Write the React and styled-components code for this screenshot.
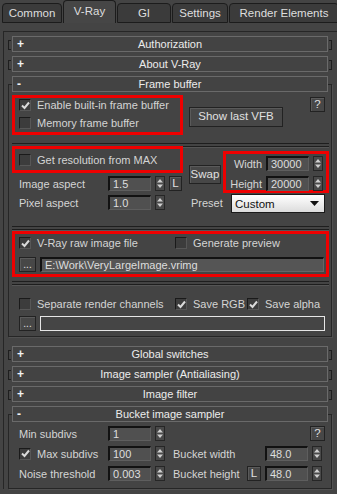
import React from 'react';
import styled, { createGlobalStyle } from 'styled-components';

const GlobalStyle = createGlobalStyle`
  html, body { margin: 0; padding: 0; background: #444; }
  body { font-family: "Liberation Sans", Arial, sans-serif; font-size: 11px; color: #dcdcdc; }
`;

const Window = styled.div`
  width: 337px;
  height: 494px;
  overflow: hidden;
  background: #444;
`;

const TabBar = styled.div`
  display: flex;
  align-items: flex-end;
  gap: 1px;
  height: 23px;
  padding-left: 2px;
  border-bottom: 1px solid transparent;
`;

const Tab = styled.div`
  flex: none;
  width: ${p => p.$w}px;
  height: ${p => (p.$active ? 23 : 20)}px;
  box-sizing: border-box;
  display: flex;
  align-items: center;
  justify-content: center;
  padding-bottom: ${p => (p.$active ? 2 : 0)}px;
  background: ${p => (p.$active ? '#464646' : '#3b3b3b')};
  border: 1px solid #1c1c1c;
  border-bottom: ${p => (p.$active ? 'none' : '1px solid #1c1c1c')};
  border-radius: 4px 4px 0 0;
  color: #dedede;
  font-size: 11.5px;
`;

const Panel = styled.div`
  display: flex;
  flex-direction: column;
  align-items: flex-start;
  margin: 7px 0 0 3px;
  border-top: 1px solid #262626;
  border-left: 1px solid #262626;
  padding: 4px 5px 0 4px;
`;

const HeaderBar = styled.div`
  display: grid;
  grid-template-columns: 16px 1fr 16px;
  align-items: center;
  height: 16px;
  box-sizing: border-box;
  border: 1px solid #6a6a6a;
  background: #434343;
  color: #ececec;
  line-height: 14px;
`;

const Sign = styled.span`
  padding-left: 4px;
  font-weight: bold;
  font-size: 12px;
  color: #f2f2f2;
`;

const Title = styled.span`
  text-align: center;
  white-space: nowrap;
`;

const Collapsed = styled.div`
  position: relative;
  width: 324px;
  box-sizing: border-box;
  padding: 0 4px;
  margin-bottom: 4px;

  &::before, &::after {
    content: '';
    position: absolute;
    top: 4px;
    width: 2px;
    height: 8px;
    border: 1px solid #1e1e1e;
  }
  &::before { left: 0; border-right: none; }
  &::after { right: 0; border-left: none; }
`;

const OpenFrame = styled.div`
  width: 324px;
  box-sizing: border-box;
  margin-top: 8px;
  margin-bottom: ${p => p.$mb || 0}px;
  border: 1px solid #262626;
  box-shadow: 1px 1px 0 #505050;
`;

const OpenHeader = styled(HeaderBar)`
  margin: -9px 3px 0 3px;
`;

const Body = styled.div`
  padding: ${p => p.$pad};
`;

const Rollout = ({ title, open, mb, pad, children }) =>
  open ? (
    <OpenFrame $mb={mb}>
      <OpenHeader>
        <Sign>-</Sign>
        <Title>{title}</Title>
        <span />
      </OpenHeader>
      <Body $pad={pad}>{children}</Body>
    </OpenFrame>
  ) : (
    <Collapsed>
      <HeaderBar>
        <Sign>+</Sign>
        <Title>{title}</Title>
        <span />
      </HeaderBar>
    </Collapsed>
  );

const RedBox = styled.div`
  box-sizing: border-box;
  width: ${p => p.$w}px;
  height: ${p => p.$h}px;
  margin-top: ${p => p.$mt || 0}px;
  border: 3px solid #ee0000;
  padding: ${p => p.$pad || '0'};
  display: flex;
  flex-direction: column;
  justify-content: ${p => p.$center ? 'center' : 'flex-start'};
  gap: ${p => p.$gap || 0}px;
`;

const Row = styled.div`
  display: flex;
  align-items: center;
  height: ${p => p.$h || 15}px;
  margin-top: ${p => p.$mt || 0}px;
  padding-left: ${p => p.$pl || 0}px;
  gap: ${p => p.$gap || 0}px;
`;

const Label = styled.div`
  flex: none;
  width: ${p => (p.$w ? `${p.$w}px` : 'auto')};
  padding-left: ${p => p.$pl || 0}px;
  box-sizing: border-box;
  text-align: ${p => p.$right ? 'right' : 'left'};
  white-space: nowrap;
  color: #d4d4d4;
`;

const Field = styled.div`
  flex: none;
  box-sizing: border-box;
  width: ${p => p.$w}px;
  height: 15px;
  margin-left: ${p => p.$ml || 0}px;
  padding-left: 3px;
  line-height: 12px;
  background: #505050;
  border-top: 2px solid #121212;
  border-left: 2px solid #121212;
  border-right: 1px solid #5e5e5e;
  border-bottom: 1px solid #5e5e5e;
  color: #dedede;
  white-space: nowrap;
  overflow: hidden;
`;

const PathField = styled(Field)`
  background: ${p => (p.$outline ? '#454545' : '#555')};
  border: ${p => (p.$outline ? '1px solid #e6e6e6' : '')};
  ${p => !p.$outline && 'border-right: 1px solid #666; border-bottom: 1px solid #666;'}
`;

const SpinBox = styled.div`
  flex: none;
  width: 10px;
  height: 15px;
  margin-left: 4px;
  box-sizing: border-box;
  border: 1px solid #262626;
  background: #494949;
  display: flex;
`;

const Spinner = () => (
  <SpinBox>
    <svg width="8" height="13" viewBox="0 0 8 13">
      <path d="M4 2 L7 5.5 L1 5.5 Z" fill="#cfcfcf" />
      <path d="M1 7.5 L7 7.5 L4 11 Z" fill="#cfcfcf" />
    </svg>
  </SpinBox>
);

const Btn = styled.div`
  flex: none;
  box-sizing: border-box;
  width: ${p => p.$w}px;
  height: ${p => p.$h}px;
  margin: ${p => p.$m || '0'};
  display: flex;
  align-items: center;
  justify-content: center;
  background: #474747;
  border: 1px solid #222;
  box-shadow: inset 1px 1px 0 #5a5a5a;
  color: #e0e0e0;
  font-size: ${p => p.$fs || 11.5}px;
  line-height: 1;
`;

const BoxWrap = styled.div`
  flex: none;
  display: flex;
  align-items: center;
  gap: 6px;
  width: ${p => (p.$w ? `${p.$w}px` : 'auto')};
  color: #d4d4d4;
  white-space: nowrap;
`;

const Square = styled.div`
  flex: none;
  width: 12px;
  height: 12px;
  box-sizing: border-box;
  background: #3c3c3c;
  border-top: 1px solid #1a1a1a;
  border-left: 1px solid #1a1a1a;
  border-right: 1px solid #575757;
  border-bottom: 1px solid #575757;
  display: flex;
  align-items: center;
  justify-content: center;
`;

const Check = ({ checked, label, w }) => (
  <BoxWrap $w={w}>
    <Square>
      {checked && (
        <svg width="9" height="9" viewBox="0 0 9 9">
          <path d="M1 4.5 L3.5 7 L8 1.5" fill="none" stroke="#dadada" strokeWidth="2" />
        </svg>
      )}
    </Square>
    {label}
  </BoxWrap>
);

const Separator = styled.div`
  margin: ${p => p.$m};
  height: 2px;
  border-top: 1px solid #1e1e1e;
  border-bottom: 1px solid #1e1e1e;
  box-shadow: 0 1px 0 #555;
`;

const Cols = styled.div`
  display: flex;
  align-items: flex-start;
  margin-top: ${p => p.$mt || 0}px;
`;

const Col = styled.div`
  flex: none;
  display: flex;
  flex-direction: column;
  width: ${p => p.$w}px;
  margin-left: ${p => p.$ml || 0}px;
`;

const Dropdown = styled.div`
  box-sizing: border-box;
  width: 94px;
  height: 19px;
  margin: 1px 0 0 8px;
  display: flex;
  align-items: center;
  justify-content: space-between;
  padding: 0 5px 0 3px;
  background: linear-gradient(#ffffff, #dcdcdc);
  border: 1px solid #1a1a1a;
  color: #111;
  font-size: 11.5px;
`;

const App = () => (
  <Window>
    <GlobalStyle />
    <TabBar>
      <Tab $w={60}>Common</Tab>
      <Tab $w={53} $active>V-Ray</Tab>
      <Tab $w={54}>GI</Tab>
      <Tab $w={56}>Settings</Tab>
      <Tab $w={110}>Render Elements</Tab>
    </TabBar>
    <Panel>
      <Rollout title="Authorization" />
      <Rollout title="About V-Ray" />
      <Rollout title="Frame buffer" open mb={9} pad="3px 2px 5px 3px">
        <Cols>
          <RedBox $w={171} $h={40} $pad="1px 0 0 4px" $gap={6}>
            <Row $h={12}><Check checked label="Enable built-in frame buffer" /></Row>
            <Row $h={12}><Check label="Memory frame buffer" /></Row>
          </RedBox>
          <Btn $w={94} $h={20} $m="12px 0 0 6px">Show last VFB</Btn>
          <Btn $w={15} $h={15} $m="2px 4px 0 auto">?</Btn>
        </Cols>
        <Separator $m="8px 0 0 0" />
        <Cols $mt={-1}>
          <Col $w={171}>
            <RedBox $w={171} $h={27} $pad="0 0 0 4px" $center>
              <Check label="Get resolution from MAX" />
            </RedBox>
            <Row $mt={3}>
              <Label $w={96} $pl={7}>Image aspect</Label>
              <Field $w={43}>1.5</Field>
              <Spinner />
              <Btn $w={13} $h={15} $m="0 0 0 4px">L</Btn>
            </Row>
            <Row $mt={4}>
              <Label $w={96} $pl={7}>Pixel aspect</Label>
              <Field $w={43}>1.0</Field>
              <Spinner />
            </Row>
          </Col>
          <Col $w={34} $ml={6}>
            <Btn $w={32} $h={19} $m="19px 0 0 0">Swap</Btn>
            <Row $mt={11}><Label $pl={2}>Preset</Label></Row>
          </Col>
          <Col $w={106}>
            <RedBox $w={106} $h={42} $mt={5} $pad="2px 3px 0 0" $gap={5}>
              <Row>
                <Label $w={36} $right>Width</Label>
                <Field $w={43} $ml={4}>30000</Field>
                <Spinner />
              </Row>
              <Row>
                <Label $w={36} $right>Height</Label>
                <Field $w={43} $ml={4}>20000</Field>
                <Spinner />
              </Row>
            </RedBox>
            <Dropdown>
              <span>Custom</span>
              <svg width="9" height="5" viewBox="0 0 9 5"><path d="M0 0 L9 0 L4.5 5 Z" fill="#111" /></svg>
            </Dropdown>
          </Col>
        </Cols>
        <Separator $m="13px 0 0 0" />
        <RedBox $w={317} $h={46} $mt={1} $pad="3px 0 0 4px" $gap={8}>
          <Row $h={12}>
            <Check checked label="V-Ray raw image file" w={156} />
            <Check label="Generate preview" />
          </Row>
          <Row>
            <Btn $w={17} $h={15} $fs={10}>...</Btn>
            <PathField $w={284} $ml={4}>E:\Work\VeryLargeImage.vrimg</PathField>
          </Row>
        </RedBox>
        <Separator $m="4px 0 0 0" />
        <Row $h={12} $mt={13} $pl={7}>
          <Check label="Separate render channels" w={156} />
          <Check checked label="Save RGB" w={72} />
          <Check checked label="Save alpha" />
        </Row>
        <Row $mt={6} $pl={7}>
          <Btn $w={17} $h={15} $fs={10}>...</Btn>
          <PathField $w={285} $ml={4} $outline />
        </Row>
      </Rollout>
      <Rollout title="Global switches" />
      <Rollout title="Image sampler (Antialiasing)" />
      <Rollout title="Image filter" />
      <Rollout title="Bucket image sampler" open pad="4px 2px 7px 10px">
        <Row>
          <Label $w={89}>Min subdivs</Label>
          <Field $w={43}>1</Field>
          <Spinner />
          <Btn $w={15} $h={15} $m="0 4px 0 auto">?</Btn>
        </Row>
        <Row $mt={5}>
          <Label $w={89}><Check checked label="Max subdivs" /></Label>
          <Field $w={43}>100</Field>
          <Spinner />
          <Label $w={100} $pl={8}>Bucket width</Label>
          <Field $w={43}>48.0</Field>
          <Spinner />
        </Row>
        <Row $mt={5}>
          <Label $w={89}>Noise threshold</Label>
          <Field $w={43}>0.003</Field>
          <Spinner />
          <Label $w={82} $pl={8}>Bucket height</Label>
          <Btn $w={14} $h={15}>L</Btn>
          <Field $w={43} $ml={4}>48.0</Field>
          <Spinner />
        </Row>
      </Rollout>
    </Panel>
  </Window>
);

export default App;
